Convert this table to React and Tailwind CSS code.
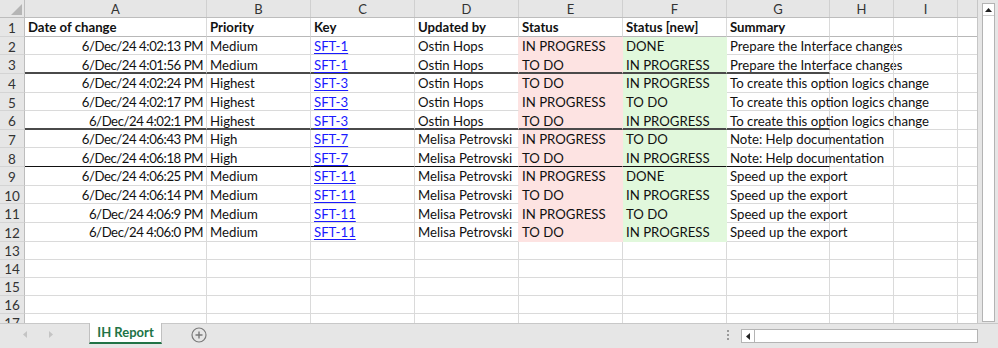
import React from "react";

const COLS = [
  { key: "A", w: "w-[182px]" },
  { key: "B", w: "w-[104px]" },
  { key: "C", w: "w-[104px]" },
  { key: "D", w: "w-[104px]" },
  { key: "E", w: "w-[104px]" },
  { key: "F", w: "w-[104px]" },
  { key: "G", w: "w-[103px]" },
  { key: "H", w: "w-[64px]" },
  { key: "I", w: "w-[64px]" },
  { key: "", w: "w-[20px]" },
];

const HEADERS = ["Date of change", "Priority", "Key", "Updated by", "Status", "Status [new]", "Summary"];

const ROWS = [
  ["6/Dec/24 4:02:13 PM", "Medium", "SFT-1", "Ostin Hops", "IN PROGRESS", "DONE", "Prepare the Interface changes"],
  ["6/Dec/24 4:01:56 PM", "Medium", "SFT-1", "Ostin Hops", "TO DO", "IN PROGRESS", "Prepare the Interface changes"],
  ["6/Dec/24 4:02:24 PM", "Highest", "SFT-3", "Ostin Hops", "TO DO", "IN PROGRESS", "To create this option logics change"],
  ["6/Dec/24 4:02:17 PM", "Highest", "SFT-3", "Ostin Hops", "IN PROGRESS", "TO DO", "To create this option logics change"],
  ["6/Dec/24 4:02:1 PM", "Highest", "SFT-3", "Ostin Hops", "TO DO", "IN PROGRESS", "To create this option logics change"],
  ["6/Dec/24 4:06:43 PM", "High", "SFT-7", "Melisa Petrovski", "IN PROGRESS", "TO DO", "Note: Help documentation"],
  ["6/Dec/24 4:06:18 PM", "High", "SFT-7", "Melisa Petrovski", "TO DO", "IN PROGRESS", "Note: Help documentation"],
  ["6/Dec/24 4:06:25 PM", "Medium", "SFT-11", "Melisa Petrovski", "IN PROGRESS", "DONE", "Speed up the export"],
  ["6/Dec/24 4:06:14 PM", "Medium", "SFT-11", "Melisa Petrovski", "TO DO", "IN PROGRESS", "Speed up the export"],
  ["6/Dec/24 4:06:9 PM", "Medium", "SFT-11", "Melisa Petrovski", "IN PROGRESS", "TO DO", "Speed up the export"],
  ["6/Dec/24 4:06:0 PM", "Medium", "SFT-11", "Melisa Petrovski", "TO DO", "IN PROGRESS", "Speed up the export"],
];

// separators under data rows (index in ROWS)
const SEPARATORS = { 1: "thick", 4: "thick", 6: "thin" };

function RowHeader({ n }) {
  return (
    <div className="w-[25px] h-full shrink-0 flex items-center justify-center pt-[3px] bg-[#e6e6e6] border-r border-r-[#bdbdbd] border-b border-b-[#d4d4d4] text-[#333] text-[13.5px]">
      {n}
    </div>
  );
}

function Cell({ col, children, className = "" }) {
  return (
    <div className={`${col.w} shrink-0 h-full flex items-center overflow-visible whitespace-nowrap ${className}`}>
      {children}
    </div>
  );
}

export default function App() {
  return (
    <div
      className="w-[998px] h-[348px] flex flex-col bg-white overflow-hidden text-[13.2px] text-[#111]"
      style={{ fontFamily: "Lato, 'Liberation Sans', sans-serif" }}
    >
      <div className="flex h-[323px]">
        {/* Grid */}
        <div className="w-[978px] flex flex-col overflow-hidden border-r border-r-[#c6c6c6]">
          {/* Column letters */}
          <div className="flex h-[18px] shrink-0 bg-[#e6e6e6] border-b border-b-[#bdbdbd]">
            <div className="w-[25px] shrink-0 border-r border-r-[#bdbdbd] relative">
              <svg className="absolute left-[11px] top-[4px]" width="11" height="11" viewBox="0 0 11 11">
                <polygon points="11,0 11,11 0,11" fill="#b5b5b5" />
              </svg>
            </div>
            {COLS.map((c, i) => (
              <div
                key={i}
                className={`${c.w} shrink-0 flex items-center justify-center pt-[2px] text-[13px] text-[#333] ${i < COLS.length - 1 ? "border-r border-r-[#d0d0d0]" : ""}`}
              >
                {c.key}
              </div>
            ))}
          </div>

          {/* Row 1: headers */}
          <div className="flex h-[18.64px] shrink-0">
            <RowHeader n={1} />
            {COLS.map((c, i) => (
              <Cell key={i} col={c} className="border-r border-r-[#dadada] border-b border-b-[#b8b8b8] pl-[3px] pt-[3px] font-bold">
                {HEADERS[i] || ""}
              </Cell>
            ))}
          </div>

          {/* Data rows */}
          {ROWS.map((r, ri) => {
            const sep = SEPARATORS[ri];
            const sepCls =
              sep === "thick"
                ? "border-b-2 border-b-[#4a4a4a]"
                : sep === "thin"
                ? "border-b border-b-[#111]"
                : null;
            return (
              <div key={ri} className="flex h-[18.64px] shrink-0">
                <RowHeader n={ri + 2} />
                {COLS.map((c, i) => {
                  const bottom = i <= 6 && sepCls ? sepCls : i === 4 ? "border-b border-b-[#fde3e2]" : i === 5 ? "border-b border-b-[#e1f8dc]" : "border-b border-b-[#dadada]";
                  const right =
                    i === 3 ? "border-r border-r-[#fde3e2]" : i === 4 ? "border-r border-r-[#fde3e2]" : i === 5 ? "border-r border-r-[#e1f8dc]" : "border-r border-r-[#dadada]";
                  const bg = i === 4 ? "bg-[#fde3e2]" : i === 5 ? "bg-[#e1f8dc]" : "";
                  const align = i === 0 ? "justify-end pr-[3px] tracking-[-0.45px]" : "pl-[3px]";
                  return (
                    <Cell key={i} col={c} className={`${bottom} ${right} ${bg} ${align} ${sep === "thick" && i <= 6 ? "pt-[4px]" : "pt-[3px]"}`}>
                      {i === 2 ? (
                        <span className="text-[#1a1aff] underline underline-offset-2">{r[i]}</span>
                      ) : (
                        r[i] || ""
                      )}
                    </Cell>
                  );
                })}
              </div>
            );
          })}

          {/* Empty rows */}
          {[13, 14, 15, 16, 17].map((n) => (
            <div key={n} className="flex h-[18px] shrink-0">
              <RowHeader n={n} />
              {COLS.map((c, i) => (
                <Cell key={i} col={c} className="border-r border-r-[#dadada] border-b border-b-[#dadada]" />
              ))}
            </div>
          ))}
        </div>

        {/* Right frame with vertical scrollbar */}
        <div className="flex-1 bg-[#e6e6e6] flex justify-center pt-[3px]">
          <div className="w-[13px] h-[319px] bg-white border border-[#b4b4b4] flex flex-col">
            <div className="h-[12px] border-b border-b-[#d0d0d0] flex items-center justify-center">
              <svg width="7" height="4" viewBox="0 0 7 4">
                <polygon points="3.5,0 7,4 0,4" fill="#222" />
              </svg>
            </div>
          </div>
        </div>
      </div>

      {/* Sheet tab bar */}
      <div className="flex-1 flex items-start bg-[#e6e6e6] border-t border-t-[#c8c8c8]">
        <div className="w-[89px] h-[20px] flex items-center gap-[22px] pl-[23px]">
          <svg width="4" height="7" viewBox="0 0 4 7">
            <polygon points="4,0 4,7 0,3.5" fill="#c4c4c4" />
          </svg>
          <svg width="4" height="7" viewBox="0 0 4 7">
            <polygon points="0,0 0,7 4,3.5" fill="#c4c4c4" />
          </svg>
        </div>
        <div className="w-[73px] h-[21px] -mt-[1px] bg-white border-x border-x-[#c0c0c0] border-b-2 border-b-[#217346] flex items-center justify-center font-bold text-[13px] text-[#217346]">
          IH Report
        </div>
        <div className="w-[74px] h-[22px] flex items-center justify-center">
          <svg width="16" height="16" viewBox="0 0 16 16">
            <circle cx="8" cy="8" r="7" fill="none" stroke="#7a7a7a" strokeWidth="1.2" />
            <path d="M8 4.5v7M4.5 8h7" stroke="#7a7a7a" strokeWidth="1.4" />
          </svg>
        </div>
        <div className="flex-1" />
        <div className="h-[22px] flex items-center mr-[12px]">
          <div className="flex flex-col gap-[2px]">
            <div className="w-[2px] h-[2px] bg-[#9a9a9a]" />
            <div className="w-[2px] h-[2px] bg-[#9a9a9a]" />
            <div className="w-[2px] h-[2px] bg-[#9a9a9a]" />
          </div>
        </div>
        <div className="w-[237px] h-[14px] mt-[5px] mr-[20px] bg-white border border-[#b4b4b4] flex">
          <div className="w-[13px] h-full border-r border-r-[#b4b4b4] flex items-center justify-center">
            <svg width="4" height="7" viewBox="0 0 4 7">
              <polygon points="4,0 4,7 0,3.5" fill="#222" />
            </svg>
          </div>
        </div>
      </div>
    </div>
  );
}
